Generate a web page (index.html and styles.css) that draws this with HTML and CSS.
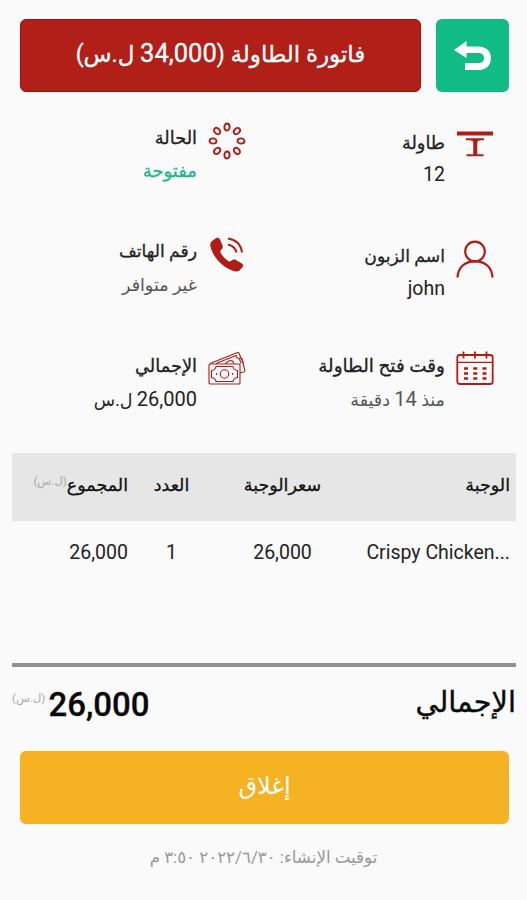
FILE: index.html
```html
<!DOCTYPE html>
<html lang="ar" dir="rtl">
<head>
    <meta charset="UTF-8">
    <meta name="viewport" content="width=device-width, initial-scale=1.0">
    <title>فاتورة الطاولة</title>
    <link rel="stylesheet" href="styles.css">
</head>
<body>
    <header class="top-bar">
        <button class="back-btn" aria-label="رجوع">
            <svg width="38" height="32" viewBox="0 0 38 32">
                <path d="M0 10 L12.500 1 V6.500 H24 C32.500 6.500 37 11.500 37 18 C37 25 32.500 30 25 30 H11 V23 H24 C28 23 30 21 30 18 C30 15 28 13 24 13 H12.500 V18 Z" fill="#fff"/>
            </svg>
        </button>
        <h1 class="title">فاتورة الطاولة (<span class="title-num">34,000</span> ل.س)</h1>
    </header>

    <section class="info">
        <div class="item item-table">
            <svg class="icon" viewBox="0 0 38 38">
                <path d="M1 11.500H37" stroke-width="4"/>
                <path d="M10 17.200H28M10.500 33.200H27.500" stroke-width="2"/>
                <path d="M13 17.500Q17.500 18 17.500 21V33H21V21Q21 18 25 17.500Z" fill="#b01c16" stroke-width="0.500"/>
            </svg>
            <div class="text">
                <p class="label">طاولة</p>
                <p class="value">12</p>
            </div>
        </div>
        <div class="item item-status">
            <svg class="icon" viewBox="0 0 38 38" stroke-width="1.900">
                <ellipse cx="19" cy="5" rx="2.600" ry="3.500"/>
                <ellipse cx="19" cy="5" rx="2.600" ry="3.500" transform="rotate(45 19 19)"/>
                <ellipse cx="19" cy="5" rx="2.600" ry="3.500" transform="rotate(90 19 19)"/>
                <ellipse cx="19" cy="5" rx="2.600" ry="3.500" transform="rotate(135 19 19)"/>
                <ellipse cx="19" cy="5" rx="2.600" ry="3.500" transform="rotate(180 19 19)"/>
                <ellipse cx="19" cy="5" rx="2.600" ry="3.500" transform="rotate(225 19 19)"/>
                <ellipse cx="19" cy="5" rx="2.600" ry="3.500" transform="rotate(270 19 19)"/>
                <ellipse cx="19" cy="5" rx="2.600" ry="3.500" transform="rotate(315 19 19)"/>
            </svg>
            <div class="text">
                <p class="label">الحالة</p>
                <p class="value open">مفتوحة</p>
            </div>
        </div>
        <div class="item item-name">
            <svg class="icon" viewBox="0 0 38 38" stroke-width="2.200">
                <circle cx="19" cy="11.500" r="9.800"/>
                <path d="M1.500 37.500C2 27 9 21.300 19 21.300S36 27 36.500 37.500"/>
            </svg>
            <div class="text">
                <p class="label">اسم الزبون</p>
                <p class="value">john</p>
            </div>
        </div>
        <div class="item item-phone">
            <svg class="icon" viewBox="0 0 38 38" stroke-width="2">
                <path d="M5 5 L9 2.500 Q10.500 2 11.500 4 L14 10 Q14.500 12 12.500 13.500 Q11 15 12 17 C14 21 17 24 20.500 26 Q22.500 27 24 25 Q25.500 23.500 27.500 24.500 L33.500 28 Q35 29 34 30.500 L31 34 Q29 35.500 25 34 C14 30 5 20 3 9.500 Q2.700 6.500 5 5Z" fill="#b01c16" stroke-width="1.400"/>
                <path d="M20 2.500Q32.500 4.500 34 16.500M20 8.500Q27 10 28.500 16.500"/>
            </svg>
            <div class="text">
                <p class="label">رقم الهاتف</p>
                <p class="value muted">غير متوافر</p>
            </div>
        </div>
        <div class="item item-time">
            <svg class="icon" viewBox="0 0 38 38">
                <rect x="1.300" y="5" width="35.400" height="29" rx="2.500" stroke-width="1.800"/>
                <path d="M1.500 12.300H36.500" stroke-width="1.200"/>
                <path d="M7.500 1.500V8.500M19 1.500V8.500M30.500 1.500V8.500" stroke-width="1.800"/>
                <path d="M8 18.500H30.500M8 23.500H30.500M8 28.500H30.500" stroke-width="2.600" stroke-dasharray="4 5.250"/>
            </svg>
            <div class="text">
                <p class="label">وقت فتح الطاولة</p>
                <p class="value muted">منذ <span class="num">14</span> دقيقة</p>
            </div>
        </div>
        <div class="item item-total">
            <svg class="icon" viewBox="0 0 38 38" stroke-width="1.100">
                <rect x="1" y="14" width="31" height="20" rx="1"/>
                <path d="M8 16.500H25Q25.500 20 29.500 20.500V27.500Q25.500 28 25 31.500H8Q7.500 28 3.500 27.500V20.500Q7.500 20 8 16.500Z"/>
                <circle cx="16.500" cy="24" r="4.200"/>
                <path d="M8.500 23V25M24.500 23V25"/>
                <path d="M2 13.500L29.500 2.500Q30.500 2.300 31 3.300L35.500 13.500M8 13.500L28 5.500Q28.500 8.500 31.500 9L33 13.500M17 13.500L22 10.500Q25 10 26 13.500"/>
                <path d="M31 8L34 9L36.800 20Q37 21.500 35.500 22L32 22.800"/>
            </svg>
            <div class="text">
                <p class="label">الإجمالي</p>
                <p class="value"><span class="num">26,000</span> ل.س</p>
            </div>
        </div>
    </section>

    <section class="order">
        <div class="row row-head">
            <span class="meal">الوجبة</span>
            <span class="price">سعرالوجبة</span>
            <span class="count">العدد</span>
            <span class="sum">المجموع<small class="currency">(ل.س)</small></span>
        </div>
        <div class="row">
            <span class="meal" dir="ltr">Crispy Chicken...</span>
            <span class="price">26,000</span>
            <span class="count">1</span>
            <span class="sum">26,000</span>
        </div>
    </section>

    <section class="total">
        <span class="total-label">الإجمالي</span>
        <span class="total-value">26,000<small class="currency">(ل.س)</small></span>
    </section>

    <button class="close-btn">إغلاق</button>
    <p class="created">توقيت الإنشاء: ٢٠٢٢/٦/٣٠ ٣:٥٠ م</p>
</body>
</html>
```
FILE: styles.css
```css
* {
    box-sizing: border-box;
}
body {
    font-family: Roboto, "DejaVu Sans", sans-serif;
    margin: 0;
    height: 900px;
    overflow: hidden;
    background-color: #fafafa;
    color: #222;
    display: flex;
    flex-direction: column;
}
h1, p {
    margin: 0;
    font-weight: normal;
}
button {
    font-family: inherit;
    border: none;
    padding: 0;
    border-radius: 6px;
    color: white;
}
.top-bar {
    display: flex;
    gap: 15px;
    padding: 19px 18px 0 20px;
    height: 92px;
}
.back-btn {
    display: flex;
    align-items: center;
    justify-content: center;
    width: 73px;
    height: 73px;
    background-color: #10bb85;
}
.title {
    flex: 1;
    height: 73px;
    line-height: 66px;
    text-align: center;
    font-size: 23px;
    white-space: nowrap;
    border-radius: 6px;
    border: 1px solid #a80b0b;
    background-color: #b02018;
    color: white;
    -webkit-text-stroke: 0.3px;
}
.title-num {
    font-size: 25.5px;
}
.info {
    display: grid;
    grid-template-columns: 248px 248px;
    grid-template-rows: 114px 114px 114px;
    padding: 30px 33px 0 0;
    height: 361px;
}
.item {
    display: flex;
    gap: 11px;
}
.icon {
    width: 38px;
    height: 38px;
    fill: none;
    stroke: #b01c16;
}
.text {
    white-space: nowrap;
}
.label {
    font-size: 17.8px;
    line-height: 31px;
    height: 34px;
    -webkit-text-stroke: 0.3px;
}
.value {
    font-size: 17.5px;
    line-height: 30px;
}
.num {
    font-size: 20px;
}
.item-name .label,
.item-phone .label {
    font-size: 17.2px;
}
.item-time .label {
    font-size: 18.4px;
}
.item-table .value,
.item-name .value {
    font-size: 19.5px;
    line-height: 31px;
}
.item-table .text,
.item-name .text {
    padding-top: 5px;
}
.item-name .icon {
    margin-top: 4px;
}
.item-table .label,
.item-name .label {
    height: 32px;
}
.item-status .value {
    font-size: 18px;
}
.open {
    color: #18b98b;
    -webkit-text-stroke: 0.3px;
}
.muted {
    color: #555;
}
.order {
    margin: 0 11px 0 12px;
    height: 210px;
}
.row {
    display: grid;
    grid-template-columns: 181px 93px 129px 1fr;
    align-items: center;
    height: 62px;
    padding: 0 6px 0 0;
    font-size: 19.5px;
    white-space: nowrap;
    text-align: center;
}
.row-head {
    height: 68px;
    padding-bottom: 4px;
    background-color: #e6e6e6;
    font-size: 17.5px;
    color: #111;
    -webkit-text-stroke: 0.3px;
}
.meal {
    text-align: right;
}
.sum {
    text-align: right;
    margin-right: -21px;
}
.currency {
    font-size: 11.5px;
    font-weight: normal;
    vertical-align: 6px;
    line-height: 1;
    color: #aaa;
    -webkit-text-stroke: 0;
}
.total {
    display: flex;
    justify-content: space-between;
    margin: 0 11px 0 12px;
    height: 88px;
    border-top: 4px solid #919191;
    line-height: 76px;
    color: #0a0a0a;
}
.total-label {
    font-size: 28.8px;
    line-height: 70px;
    -webkit-text-stroke: 0.4px;
}
.total-value {
    font-size: 33px;
    font-weight: 500;
    -webkit-text-stroke: 0.3px;
}
.total-value .currency {
    margin-right: 3px;
    vertical-align: 14px;
}
.close-btn {
    margin: 0 18px 0 20px;
    height: 73px;
    padding-bottom: 4px;
    font-size: 24px;
    background-color: #f5b223;
}
.created {
    text-align: center;
    line-height: 68px;
    font-size: 16.7px;
    color: #999;
}
```
